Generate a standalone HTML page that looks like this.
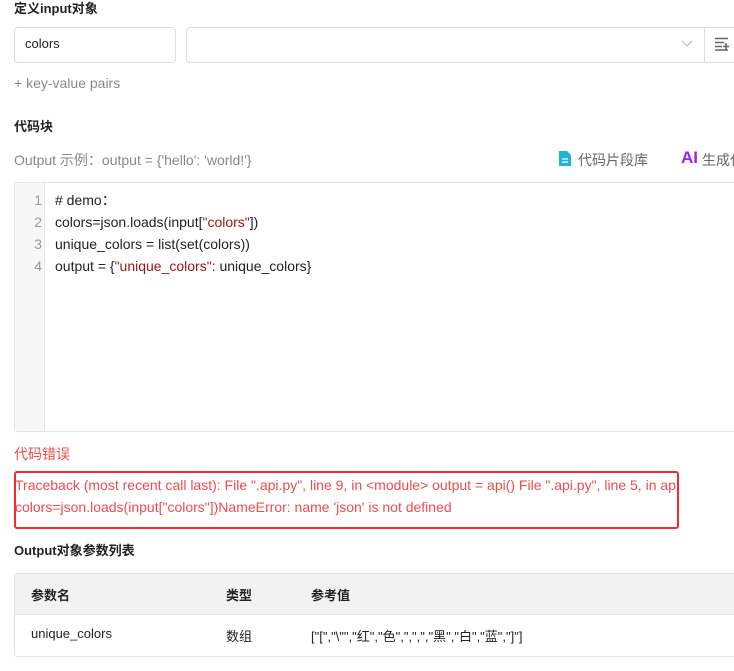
<!DOCTYPE html>
<html><head><meta charset="utf-8"><style>
*{margin:0;padding:0;box-sizing:border-box}
body{width:734px;height:671px;overflow:hidden;background:#fff;font-family:"Liberation Sans","Noto Sans CJK SC",sans-serif;font-size:14px;color:#222;position:relative}
.a{position:absolute;white-space:nowrap}
.b{font-weight:bold;font-size:13px}
</style></head><body>
<div class="a b" style="left:14px;top:-2px">定义input对象</div>
<div class="a" style="left:14px;top:27px;width:162px;height:36px;border:1px solid #dcdcdc;border-radius:4px;padding:8px 10px;font-size:13px">colors</div>
<div class="a" style="left:186px;top:27px;width:560px;height:36px;border:1px solid #dcdcdc;border-radius:4px"></div>
<div class="a" style="left:704px;top:28px;width:1px;height:34px;background:#dcdcdc"></div>
<svg class="a" style="left:680px;top:38px" width="14" height="10"><path d="M2 3 L7 8 L12 3" stroke="#bbb" stroke-width="1.2" fill="none"/></svg>
<svg class="a" style="left:715px;top:37px" width="16" height="14"><path d="M0 1.5H13M0 5.5H9M0 9.5H7M0 13H13M11 6V13M8 9.5H14" stroke="#666" stroke-width="1.6" fill="none"/></svg>
<div class="a" style="left:14px;top:75px;color:#888">+ key-value pairs</div>
<div class="a b" style="left:14px;top:116px">代码块</div>
<div class="a" style="left:14px;top:150px;color:#888">Output 示例：output = {'hello': 'world!'}</div>
<svg class="a" style="left:558px;top:150px" width="14" height="17"><path d="M1 1H9L13 5V16H1Z" fill="#1fb6d6"/><path d="M4 9H10M4 12H10" stroke="#fff" stroke-width="1.3"/></svg>
<div class="a" style="left:578px;top:150px;color:#666">代码片段库</div>
<div class="a" style="left:681px;top:148px;color:#9b1ef2;font-size:17px;font-weight:bold">AI</div>
<div class="a" style="left:702px;top:150px;color:#666">生成代码</div>
<div class="a" style="left:14px;top:182px;width:740px;height:250px;border:1px solid #e2e2e2;border-radius:3px"></div>
<div class="a" style="left:15px;top:183px;width:30px;height:248px;background:#f7f7f7;border-right:1px solid #e6e6e6"></div>
<div class="a" style="left:15px;top:189px;width:27px;text-align:right;color:#999;line-height:22px;white-space:pre">1
2
3
4</div>
<div class="a" style="left:55px;top:189px;line-height:22px;white-space:pre;color:#222"># demo：
colors=json.loads(input[<span style="color:#a31515">"colors"</span>])
unique_colors = list(set(colors))
output = {<span style="color:#a31515">"unique_colors"</span>: unique_colors}</div>
<div class="a" style="left:14px;top:444px;color:#f04b4b">代码错误</div>
<div class="a" style="left:14px;top:471px;width:665px;height:58px;border:2px solid #f42b2b;border-radius:3px"></div>
<div class="a" style="left:15px;top:474px;width:662px;overflow:hidden;color:#f04b4b;line-height:22px;white-space:pre">Traceback (most recent call last): File ".api.py", line 9, in &lt;module&gt; output = api() File ".api.py", line 5, in ap
colors=json.loads(input["colors"])NameError: name 'json' is not defined</div>
<div class="a b" style="left:14px;top:540px">Output对象参数列表</div>
<div class="a" style="left:14px;top:573px;width:740px;height:84px;border:1px solid #e2e2e2;border-radius:3px;overflow:hidden">
<div style="height:41px;background:#f2f2f2;border-bottom:1px solid #e2e2e2"></div></div>
<div class="a b" style="left:31px;top:585px">参数名</div>
<div class="a b" style="left:226px;top:585px">类型</div>
<div class="a b" style="left:311px;top:585px">参考值</div>
<div class="a" style="left:31px;top:626px;font-size:13px">unique_colors</div>
<div class="a" style="left:226px;top:626px;font-size:13px">数组</div>
<div class="a" style="left:311px;top:626px;font-size:13px">["[","\"","红","色",",",","黑","白","蓝","]"]</div>
</body></html>
